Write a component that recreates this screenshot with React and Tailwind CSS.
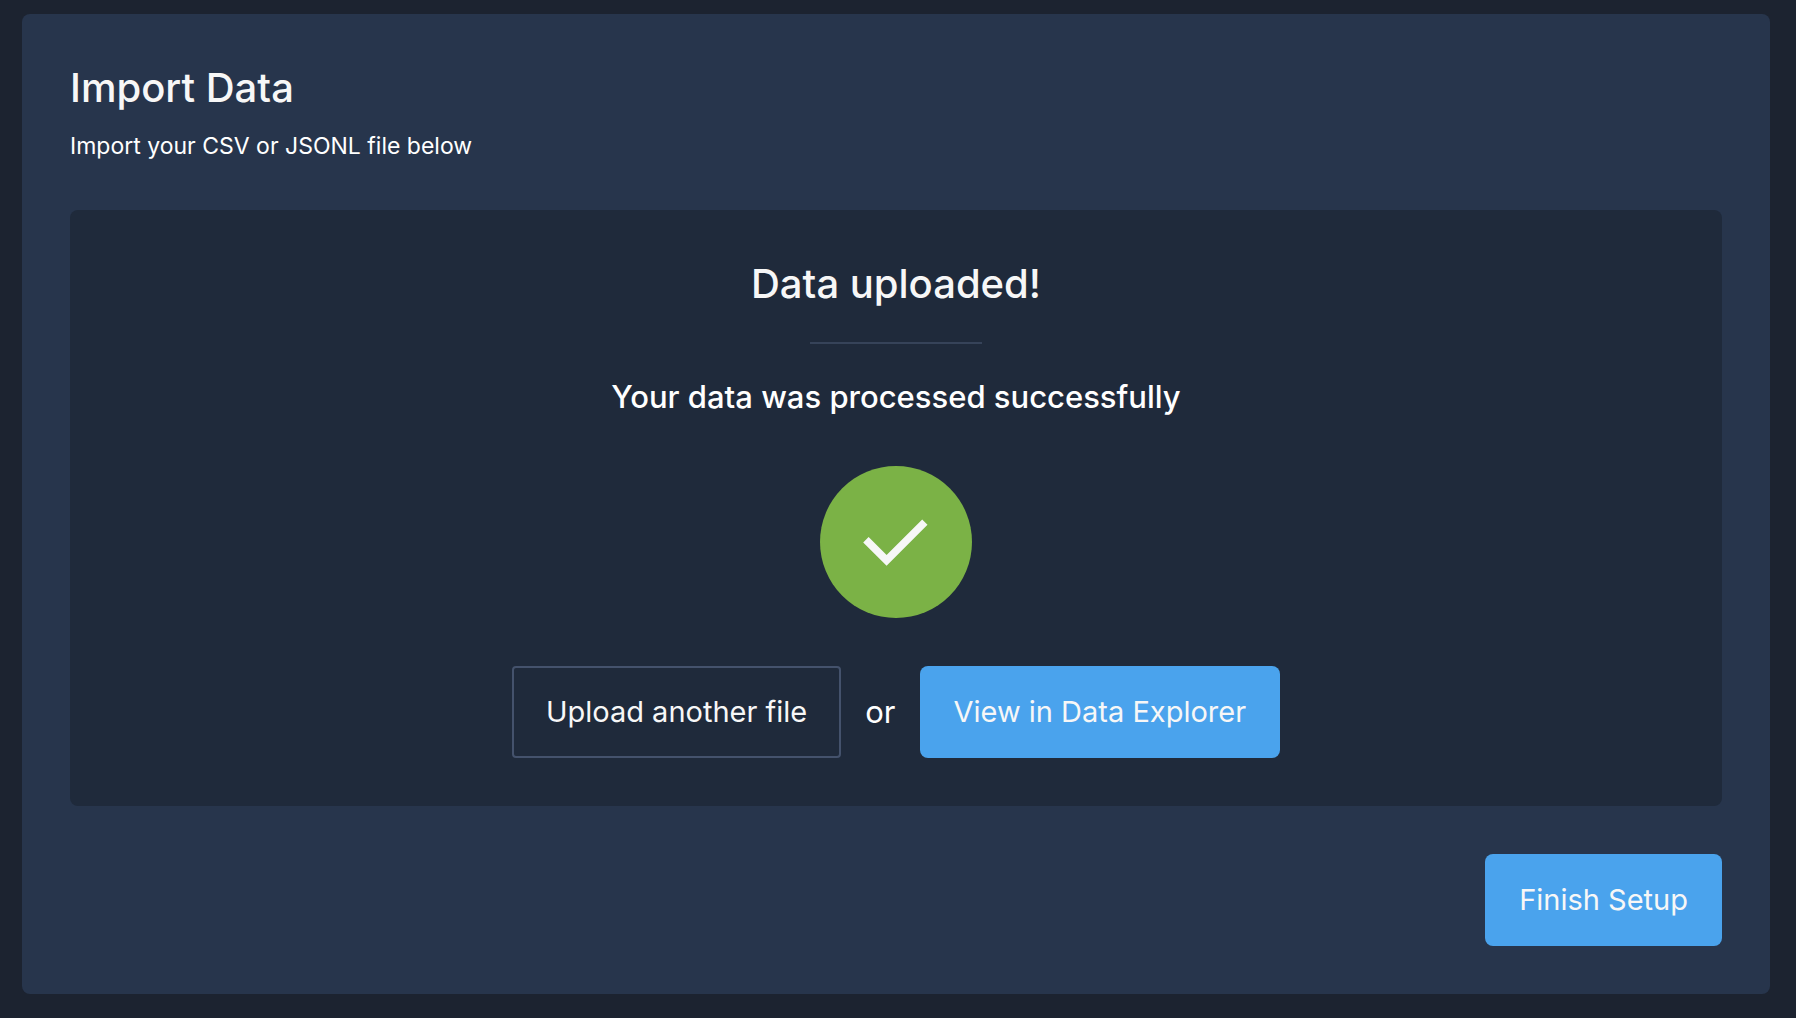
function PrimaryButton({ children }) {
  return (
    <button
      type="button"
      className="h-[92px] rounded-lg bg-[#4aa3ed] px-[34px] text-[29px] leading-9 text-[#f7f7f7]"
    >
      {children}
    </button>
  );
}

function SuccessIcon() {
  return (
    <svg viewBox="0 0 152 152" className="mt-12 size-[152px]" role="img" aria-label="Success">
      <circle cx="76" cy="76" r="76" fill="#7bb246" />
      <path
        d="M43.2 76.5 L48.6 71.1 L66.6 89.1 L102.2 53.5 L107.5 58.8 L66.6 99.8 Z"
        fill="#f7f7f7"
      />
    </svg>
  );
}

export default function App() {
  return (
    <div className="min-h-screen bg-[#1c2330] pt-3.5 pr-[26px] pb-6 pl-[22px] font-['Inter',sans-serif] text-[#f7f7f7]">
      <main className="flex flex-col rounded-lg bg-[#27354c] p-12">
        <h1 className="text-[40px] leading-[52px] font-medium">Import Data</h1>
        <p className="mt-4 text-[23px] leading-8 text-white">Import your CSV or JSONL file below</p>

        <section className="mt-12 flex flex-col items-center rounded-lg bg-[#1f2a3b] p-12">
          <h2 className="text-[40px] leading-[52px] font-medium">Data uploaded!</h2>
          <hr className="mt-8 w-[172px] border-t-2 border-[#364359]" />
          <p className="mt-8 text-[31px] leading-[42px] font-medium text-white">
            Your data was processed successfully
          </p>
          <SuccessIcon />
          <div className="mt-12 flex items-center gap-6">
            <button
              type="button"
              className="h-[92px] rounded border-2 border-[#44526c] px-8 text-[29px] leading-9"
            >
              Upload another file
            </button>
            <span className="text-[31px] leading-[42px] text-white">or</span>
            <PrimaryButton>View in Data Explorer</PrimaryButton>
          </div>
        </section>

        <div className="mt-12 flex justify-end">
          <PrimaryButton>Finish Setup</PrimaryButton>
        </div>
      </main>
    </div>
  );
}
